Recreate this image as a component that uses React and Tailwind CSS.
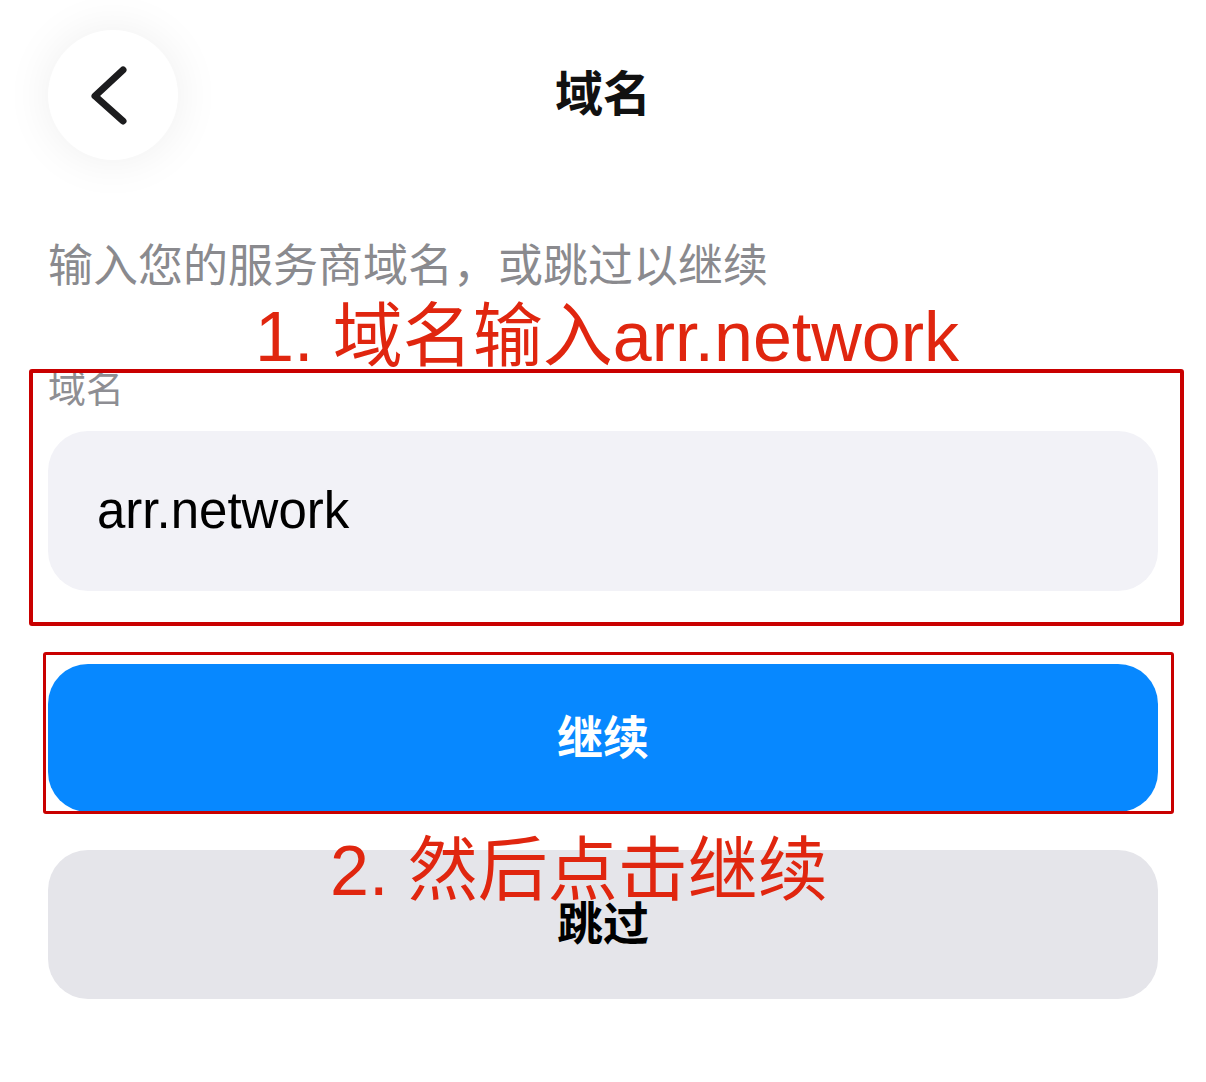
const font = "font-['Liberation_Sans','Noto_Sans_CJK_SC',sans-serif]";

function BackButton() {
    return (
        <button className="flex h-[130px] w-[130px] items-center justify-center rounded-full bg-white shadow-[0_0_48px_rgba(0,0,0,0.07)]">
            <svg width="130" height="130" viewBox="0 0 130 130" fill="none">
                <path
                    d="M75 40 L47 66 L75 91"
                    stroke="#1c1c1e"
                    strokeWidth="7"
                    strokeLinecap="round"
                    strokeLinejoin="round"
                />
            </svg>
        </button>
    );
}

export default function App() {
    return (
        <div className={`relative min-h-[1082px] w-full overflow-hidden bg-white ${font}`}>
            <div className="px-[48px] pt-[30px]">
                <div className="flex items-center justify-between">
                    <BackButton />
                    <h1 className="text-[48px] font-bold text-[#111]">域名</h1>
                    <div className="w-[130px]" />
                </div>

                <p className="mt-[81px] text-[45px] leading-[52px] text-[#8a8a8e]">
                    输入您的服务商域名，或跳过以继续
                </p>

                <label className="mt-[74px] block text-[38px] leading-[44px] text-[#8e8e93]">
                    域名
                </label>
                <div className="mt-[20px] flex h-[160px] items-center rounded-[40px] bg-[#f2f2f7] px-[49px]">
                    <span className="text-[51px] text-black">arr.network</span>
                </div>

                <button className="mt-[73px] flex h-[148px] w-full items-center justify-center rounded-[40px] bg-[#0788ff] text-[46px] font-bold text-white">
                    继续
                </button>
                <button className="mt-[38px] flex h-[149px] w-full items-center justify-center rounded-[40px] bg-[#e5e5ea] text-[46px] font-bold text-black">
                    跳过
                </button>
            </div>

            {/* annotations drawn over the screenshot */}
            <div className="pointer-events-none absolute left-[29px] top-[369px] h-[257px] w-[1155px] rounded-[3px] border-[4px] border-[#c90000]" />
            <div className="pointer-events-none absolute left-[43px] top-[652px] h-[162px] w-[1131px] rounded-[3px] border-[3px] border-[#c90000]" />
            <div className="pointer-events-none absolute left-[255px] top-[302px] whitespace-nowrap text-[70px] leading-none text-[#e0260f]">
                1. 域名输入arr.network
            </div>
            <div className="pointer-events-none absolute left-[330px] top-[836px] whitespace-nowrap text-[70px] leading-none text-[#e0260f]">
                2. 然后点击继续
            </div>
        </div>
    );
}
